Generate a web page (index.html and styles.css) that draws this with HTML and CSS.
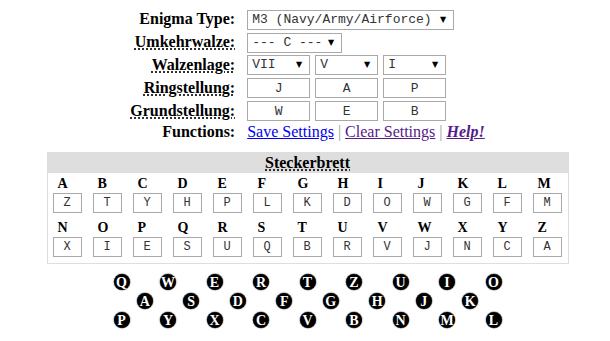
FILE: index.html
```html
<!DOCTYPE html>
<html lang="de">
<head>
    <meta charset="UTF-8">
    <meta name="viewport" content="width=device-width, initial-scale=1.0">
    <title>Enigma</title>
    <link rel="stylesheet" href="styles.css">
</head>
<body>

    <div class="settings">
        <div class="lbl">Enigma Type:</div>
        <div class="field">
            <span class="pick"><select class="sel sel-type"><option>M3 (Navy/Army/Airforce)</option></select></span>
        </div>

        <div class="lbl"><abbr title="Reflector">Umkehrwalze:</abbr></div>
        <div class="field">
            <span class="pick"><select class="sel sel-ukw"><option>--- C ---</option></select></span>
        </div>

        <div class="lbl"><abbr title="Wheel order">Walzenlage:</abbr></div>
        <div class="field rotors">
            <span class="pick"><select class="sel sel-rotor"><option>VII</option></select></span>
            <span class="pick"><select class="sel sel-rotor"><option>V</option></select></span>
            <span class="pick"><select class="sel sel-rotor"><option>I</option></select></span>
        </div>

        <div class="lbl"><abbr title="Ring settings">Ringstellung:</abbr></div>
        <div class="field rotors">
            <input type="text" class="ring" value="J">
            <input type="text" class="ring" value="A">
            <input type="text" class="ring" value="P">
        </div>

        <div class="lbl"><abbr title="Start position">Grundstellung:</abbr></div>
        <div class="field rotors">
            <input type="text" class="ring" value="W">
            <input type="text" class="ring" value="E">
            <input type="text" class="ring" value="B">
        </div>

        <div class="lbl fn">Functions:</div>
        <div class="field fn links">
            <a href="#" class="link">Save Settings</a>
            <span class="sep">|</span>
            <a href="#" class="link visited">Clear Settings</a>
            <span class="sep">|</span>
            <a href="#" class="link visited help">Help!</a>
        </div>
    </div>

    <div class="board">
        <div class="board-head"><abbr title="Plugboard">Steckerbrett</abbr></div>
        <div class="plugs">
            <div class="plug"><span class="plug-letter">A</span><input type="text" class="plug-input" value="Z"></div>
            <div class="plug"><span class="plug-letter">B</span><input type="text" class="plug-input" value="T"></div>
            <div class="plug"><span class="plug-letter">C</span><input type="text" class="plug-input" value="Y"></div>
            <div class="plug"><span class="plug-letter">D</span><input type="text" class="plug-input" value="H"></div>
            <div class="plug"><span class="plug-letter">E</span><input type="text" class="plug-input" value="P"></div>
            <div class="plug"><span class="plug-letter">F</span><input type="text" class="plug-input" value="L"></div>
            <div class="plug"><span class="plug-letter">G</span><input type="text" class="plug-input" value="K"></div>
            <div class="plug"><span class="plug-letter">H</span><input type="text" class="plug-input" value="D"></div>
            <div class="plug"><span class="plug-letter">I</span><input type="text" class="plug-input" value="O"></div>
            <div class="plug"><span class="plug-letter">J</span><input type="text" class="plug-input" value="W"></div>
            <div class="plug"><span class="plug-letter">K</span><input type="text" class="plug-input" value="G"></div>
            <div class="plug"><span class="plug-letter">L</span><input type="text" class="plug-input" value="F"></div>
            <div class="plug"><span class="plug-letter">M</span><input type="text" class="plug-input" value="M"></div>

            <div class="plug"><span class="plug-letter">N</span><input type="text" class="plug-input" value="X"></div>
            <div class="plug"><span class="plug-letter">O</span><input type="text" class="plug-input" value="I"></div>
            <div class="plug"><span class="plug-letter">P</span><input type="text" class="plug-input" value="E"></div>
            <div class="plug"><span class="plug-letter">Q</span><input type="text" class="plug-input" value="S"></div>
            <div class="plug"><span class="plug-letter">R</span><input type="text" class="plug-input" value="U"></div>
            <div class="plug"><span class="plug-letter">S</span><input type="text" class="plug-input" value="Q"></div>
            <div class="plug"><span class="plug-letter">T</span><input type="text" class="plug-input" value="B"></div>
            <div class="plug"><span class="plug-letter">U</span><input type="text" class="plug-input" value="R"></div>
            <div class="plug"><span class="plug-letter">V</span><input type="text" class="plug-input" value="V"></div>
            <div class="plug"><span class="plug-letter">W</span><input type="text" class="plug-input" value="J"></div>
            <div class="plug"><span class="plug-letter">X</span><input type="text" class="plug-input" value="N"></div>
            <div class="plug"><span class="plug-letter">Y</span><input type="text" class="plug-input" value="C"></div>
            <div class="plug"><span class="plug-letter">Z</span><input type="text" class="plug-input" value="A"></div>
        </div>
    </div>

    <div class="keys">
        <div class="key-row">
            <span class="key">Q</span><span class="key">W</span><span class="key">E</span>
            <span class="key">R</span><span class="key">T</span><span class="key">Z</span>
            <span class="key">U</span><span class="key">I</span><span class="key">O</span>
        </div>
        <div class="key-row">
            <span class="key">A</span><span class="key">S</span><span class="key">D</span>
            <span class="key">F</span><span class="key">G</span><span class="key">H</span>
            <span class="key">J</span><span class="key">K</span>
        </div>
        <div class="key-row">
            <span class="key">P</span><span class="key">Y</span><span class="key">X</span>
            <span class="key">C</span><span class="key">V</span><span class="key">B</span>
            <span class="key">N</span><span class="key">M</span><span class="key">L</span>
        </div>
    </div>

</body>
</html>
```

FILE: styles.css
```css
body {
    font-family: "Liberation Serif", "Times New Roman", serif;
    margin: 0;
    padding-left: 5px;
    color: #000;
    background: #fff;
}

abbr {
    text-decoration: underline dotted;
    text-underline-offset: 2px;
    cursor: help;
}

/* settings table */
.settings {
    display: grid;
    grid-template-columns: auto auto;
    justify-content: center;
    align-items: center;
    column-gap: 12px;
    row-gap: 3px;
    margin-top: 9px;
}

.lbl {
    text-align: right;
    font-weight: bold;
    font-size: 16px;
    line-height: 20px;
}

.field {
    height: 20px;
}

.rotors {
    display: flex;
    gap: 5px;
}

.fn {
    margin-top: -2px;
}

.pick {
    position: relative;
    display: inline-block;
    height: 20px;
}

.pick::after {
    content: "\25BC";
    position: absolute;
    right: 8px;
    top: 5px;
    font-family: "DejaVu Sans", sans-serif;
    font-size: 8px;
    line-height: 10px;
    color: #000;
    pointer-events: none;
}

.sel {
    -webkit-appearance: none;
    appearance: none;
    display: block;
    box-sizing: border-box;
    height: 20px;
    margin: 0;
    padding: 0 0 0 4px;
    border: 1px solid #a9a9a9;
    border-radius: 0;
    background: #fff;
    color: #333;
    font-family: "Liberation Mono", "Courier New", monospace;
    font-size: 13px;
    line-height: 18px;
}

.sel-type {
    width: 207px;
}

.sel-ukw {
    width: 95px;
}

.sel-rotor {
    width: 63px;
}

.ring {
    box-sizing: border-box;
    width: 63px;
    height: 20px;
    margin: 0;
    padding: 0;
    border: 1px solid #a9a9a9;
    text-align: center;
    font-family: "Liberation Mono", "Courier New", monospace;
    font-size: 13px;
    color: #333;
}

.links {
    font-size: 16px;
    line-height: 20px;
    white-space: nowrap;
}

.link {
    color: #0000ee;
}

.link.visited {
    color: #551a8b;
}

.help {
    font-weight: bold;
    font-style: italic;
}

.sep {
    color: #a0a0a0;
}

/* steckerbrett */
.board {
    width: 520px;
    margin: 10px auto 0;
    border: 1px solid #ddd;
}

.board-head {
    height: 20px;
    line-height: 20px;
    background: #dedede;
    text-align: center;
    font-weight: bold;
    font-size: 16px;
}

.plugs {
    display: grid;
    grid-template-columns: repeat(13, 40px);
    row-gap: 7px;
    padding: 3px 0 6px;
}

.plug-letter {
    display: block;
    padding-left: 10px;
    font-family: "Liberation Serif", "Times New Roman", serif;
    font-weight: bold;
    font-size: 14px;
    line-height: 15px;
}

.plug-input {
    display: block;
    box-sizing: border-box;
    width: 29px;
    height: 20px;
    margin: 2px 0 0 5px;
    padding: 0;
    border: 1px solid #a9a9a9;
    text-align: center;
    font-family: "Liberation Mono", "Courier New", monospace;
    font-size: 12px;
    color: #333;
}

/* keyboard */
.keys {
    margin-top: 10px;
}

.key-row {
    display: flex;
    justify-content: center;
    gap: 30.5px;
    height: 16px;
    margin-bottom: 3px;
}

.key {
    width: 16px;
    height: 16px;
    border-radius: 50%;
    background: #000;
    box-shadow: 0 0 1px 0.5px #777;
    color: #fff;
    text-align: center;
    font-family: "Liberation Serif", "Times New Roman", serif;
    font-weight: bold;
    font-size: 14px;
    line-height: 17px;
}
```
